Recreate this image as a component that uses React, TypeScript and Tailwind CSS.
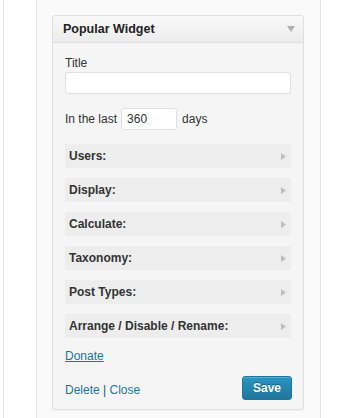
const sections = ["Users:", "Display:", "Calculate:", "Taxonomy:", "Post Types:", "Arrange / Disable / Rename:"];

export default function App() {
  return (
    <div className="w-[342px] h-[418px] bg-white flex overflow-hidden text-[12px] text-[#333] font-['Liberation_Sans',Arial,sans-serif]">
      <div className="ml-[3px] w-[318px] h-full border-l border-r border-[#e5e5e5] flex">
        <div className="w-[33px] h-full border-r border-[#e5e5e5] bg-white" />
        <div className="flex-1 h-full bg-[#fafafa] pl-[15px] pt-[15px]">
          <div className="w-[252px] border border-[#dfdfdf] rounded-[3px] bg-[#f5f5f5] shadow-[0_1px_1px_rgba(0,0,0,0.04)]">
            <div className="h-[27px] flex items-center justify-between pl-[10px] pr-[8px] border-b border-[#dfdfdf] bg-gradient-to-b from-[#f9f9f9] to-[#ececec] rounded-t-[3px]">
              <span className="font-bold text-[#222] text-[12.5px]">Popular Widget</span>
              <svg width="8" height="6" viewBox="0 0 8 6">
                <path d="M0 0 L8 0 L4 6 Z" fill="#b0b0b0" />
              </svg>
            </div>
            <div className="px-[12px] pt-[12px] pb-[9px]">
              <div className="leading-[16px]">Title</div>
              <div className="mt-[1px] h-[22px] w-[226px] bg-white border border-[#dfdfdf] rounded-[3px]" />
              <div className="mt-[14px] flex items-center gap-[4px] h-[22px]">
                <span>In the last</span>
                <div className="h-[22px] w-[56px] bg-white border border-[#dfdfdf] rounded-[3px] pl-[5px] leading-[20px]">360</div>
                <span className="ml-[1px]">days</span>
              </div>
              <div className="mt-[14px] flex flex-col gap-[10px]">
                {sections.map((s) => (
                  <div key={s} className="h-[24px] bg-[#ededed] flex items-center justify-between pl-[4px] pr-[5px]">
                    <span className="font-bold text-[#333]">{s}</span>
                    <svg width="5" height="7" viewBox="0 0 5 7">
                      <path d="M0 0 L5 3.5 L0 7 Z" fill="#bdbdbd" />
                    </svg>
                  </div>
                ))}
              </div>
              <div className="mt-[10px] leading-[16px]">
                <a className="text-[#21759b] underline">Donate</a>
              </div>
              <div className="mt-[12px] flex items-center justify-between">
                <div className="text-[#21759b] pt-[3px]">
                  <a>Delete</a> <span className="text-[#2c4f66]">|</span> <a>Close</a>
                </div>
                <button className="h-[24px] w-[50px] mr-[-1px] rounded-[3px] border border-[#21759b] bg-gradient-to-b from-[#2a95c5] to-[#21759b] text-white font-bold text-[12px] leading-[20px] [text-shadow:0_-1px_0_rgba(0,0,0,0.3)] shadow-[inset_0_1px_0_rgba(120,200,230,0.5)]">
                  Save
                </button>
              </div>
            </div>
          </div>
        </div>
      </div>
    </div>
  );
}
